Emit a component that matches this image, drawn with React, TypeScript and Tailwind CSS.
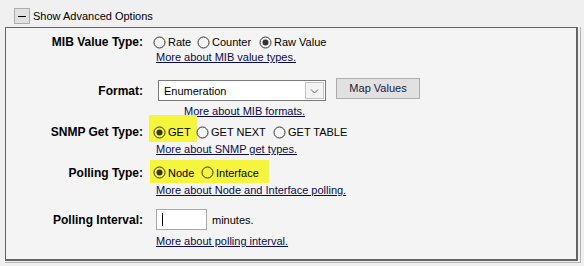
import React from 'react';

const Radio = ({ checked, label, className }: { checked?: boolean; label: string; className?: string }) => (
  <div className={`flex items-center gap-[2px] ${className ?? ''}`}>
    <svg width="13" height="13" viewBox="0 0 13 13" className="shrink-0">
      <circle cx="6.5" cy="6.5" r="5.5" fill="none" stroke="#333333" strokeWidth="1" />
      {checked && <circle cx="6.5" cy="6.5" r="3" fill="#333333" />}
    </svg>
    <span className="leading-[14px]">{label}</span>
  </div>
);

const Help = ({ text, className }: { text: string; className?: string }) => (
  <div className={`h-[14px] leading-[14px] text-[#0a0a50] underline underline-offset-[1px] ${className ?? ''}`}>{text}</div>
);

const Label = ({ text, className }: { text: string; className?: string }) => (
  <div className={`text-right font-bold text-[12px] leading-[14px] pr-[1px] ${className ?? ''}`}>{text}</div>
);

const App: React.FC = () => {
  return (
    <div className="w-[584px] h-[266px] bg-[#f0f0f0] text-black text-[11px] font-['Liberation_Sans',Arial,sans-serif] overflow-hidden">
      {/* Header toggle */}
      <div className="h-[27px] flex items-start pt-[8px] pl-[14px]">
        <div className="w-[16px] h-[16px] border border-[#adadad] bg-[#e1e1e1] flex items-center justify-center">
          <div className="w-[8px] h-[1px] bg-black" />
        </div>
        <span className="ml-[3px] leading-[16px]">Show Advanced Options</span>
      </div>

      <div className="ml-[5px] w-[576px] h-[236px] border-r border-b border-[#b4b4b4]">
        <div className="w-[573px] h-[234px] bg-[#f4f4f4] border-l border-t border-r-2 border-b-2 border-[#646464]">
          {/* MIB Value Type */}
          <div className="grid grid-cols-[138px_1fr] gap-x-[6px] mt-[7px] h-[14px] items-center">
            <Label text="MIB Value Type:" />
            <div className="flex items-center pl-[3px]">
              <Radio label="Rate" className="w-[44px]" />
              <Radio label="Counter" className="w-[62px]" />
              <Radio label="Raw Value" checked />
            </div>
          </div>
          <Help text="More about MIB value types." className="ml-[150px] mt-[1px]" />

          {/* Format */}
          <div className="grid grid-cols-[138px_1fr] gap-x-[6px] mt-[16px] h-[21px] items-center">
            <Label text="Format:" />
            <div className="flex items-start h-[21px]">
              <div className="ml-[8px] w-[168px] h-[21px] bg-white border border-[#7a7a7a] flex items-center justify-between pl-[5px] pr-[1px]">
                <span className="leading-[14px]">Enumeration</span>
                <div className="w-[19px] h-[17px] border border-[#c4c4c4] bg-[#f4f4f4] flex items-center justify-center">
                  <svg width="9" height="6" viewBox="0 0 9 6">
                    <path d="M1 1.5 L4.5 5 L8 1.5" fill="none" stroke="#606060" strokeWidth="1" />
                  </svg>
                </div>
              </div>
              <div className="ml-[10px] -mt-[2px] w-[84px] h-[21px] bg-[#e1e1e1] border border-[#adadad] flex items-center justify-center text-[#1a1a3a]">
                Map Values
              </div>
            </div>
          </div>
          <Help text="More about MIB formats." className="ml-[178px] mt-[3px]" />

          {/* SNMP Get Type */}
          <div className="grid grid-cols-[138px_1fr] gap-x-[6px] -mt-[3px] h-[27px] items-end">
            <Label text="SNMP Get Type:" className="pb-[3px]" />
            <div className="flex items-end">
              <div className="-ml-[1px] h-[27px] w-[48px] bg-[#f5f53d] flex items-end pb-[3px] pl-[4px]">
                <Radio label="GET" checked />
              </div>
              <Radio label="GET NEXT" className="w-[77px] pb-[3px] -ml-[1px]" />
              <Radio label="GET TABLE" className="pb-[3px]" />
            </div>
          </div>
          <Help text="More about SNMP get types." className="ml-[150px]" />

          {/* Polling Type */}
          <div className="grid grid-cols-[138px_1fr] gap-x-[6px] mt-[4px] h-[23px] items-center">
            <Label text="Polling Type:" className="pt-[2px]" />
            <div className="h-[23px] w-[119px] bg-[#f5f53d] flex items-center pt-[2px] pl-[3px]">
              <Radio label="Node" checked className="w-[48px]" />
              <Radio label="Interface" />
            </div>
          </div>
          <Help text="More about Node and Interface polling." className="ml-[150px]" />

          {/* Polling Interval */}
          <div className="grid grid-cols-[138px_1fr] gap-x-[6px] mt-[12px] h-[21px] items-center">
            <Label text="Polling Interval:" />
            <div className="flex items-center">
              <div className="ml-[6px] w-[51px] h-[21px] bg-white border border-[#a8a8a8] flex items-center pl-[5px]">
                <div className="w-[1px] h-[13px] bg-black" />
              </div>
              <span className="ml-[5px] leading-[14px]">minutes.</span>
            </div>
          </div>
          <Help text="More about polling interval." className="ml-[150px] mt-[4px]" />
        </div>
      </div>
    </div>
  );
};

export default App;
